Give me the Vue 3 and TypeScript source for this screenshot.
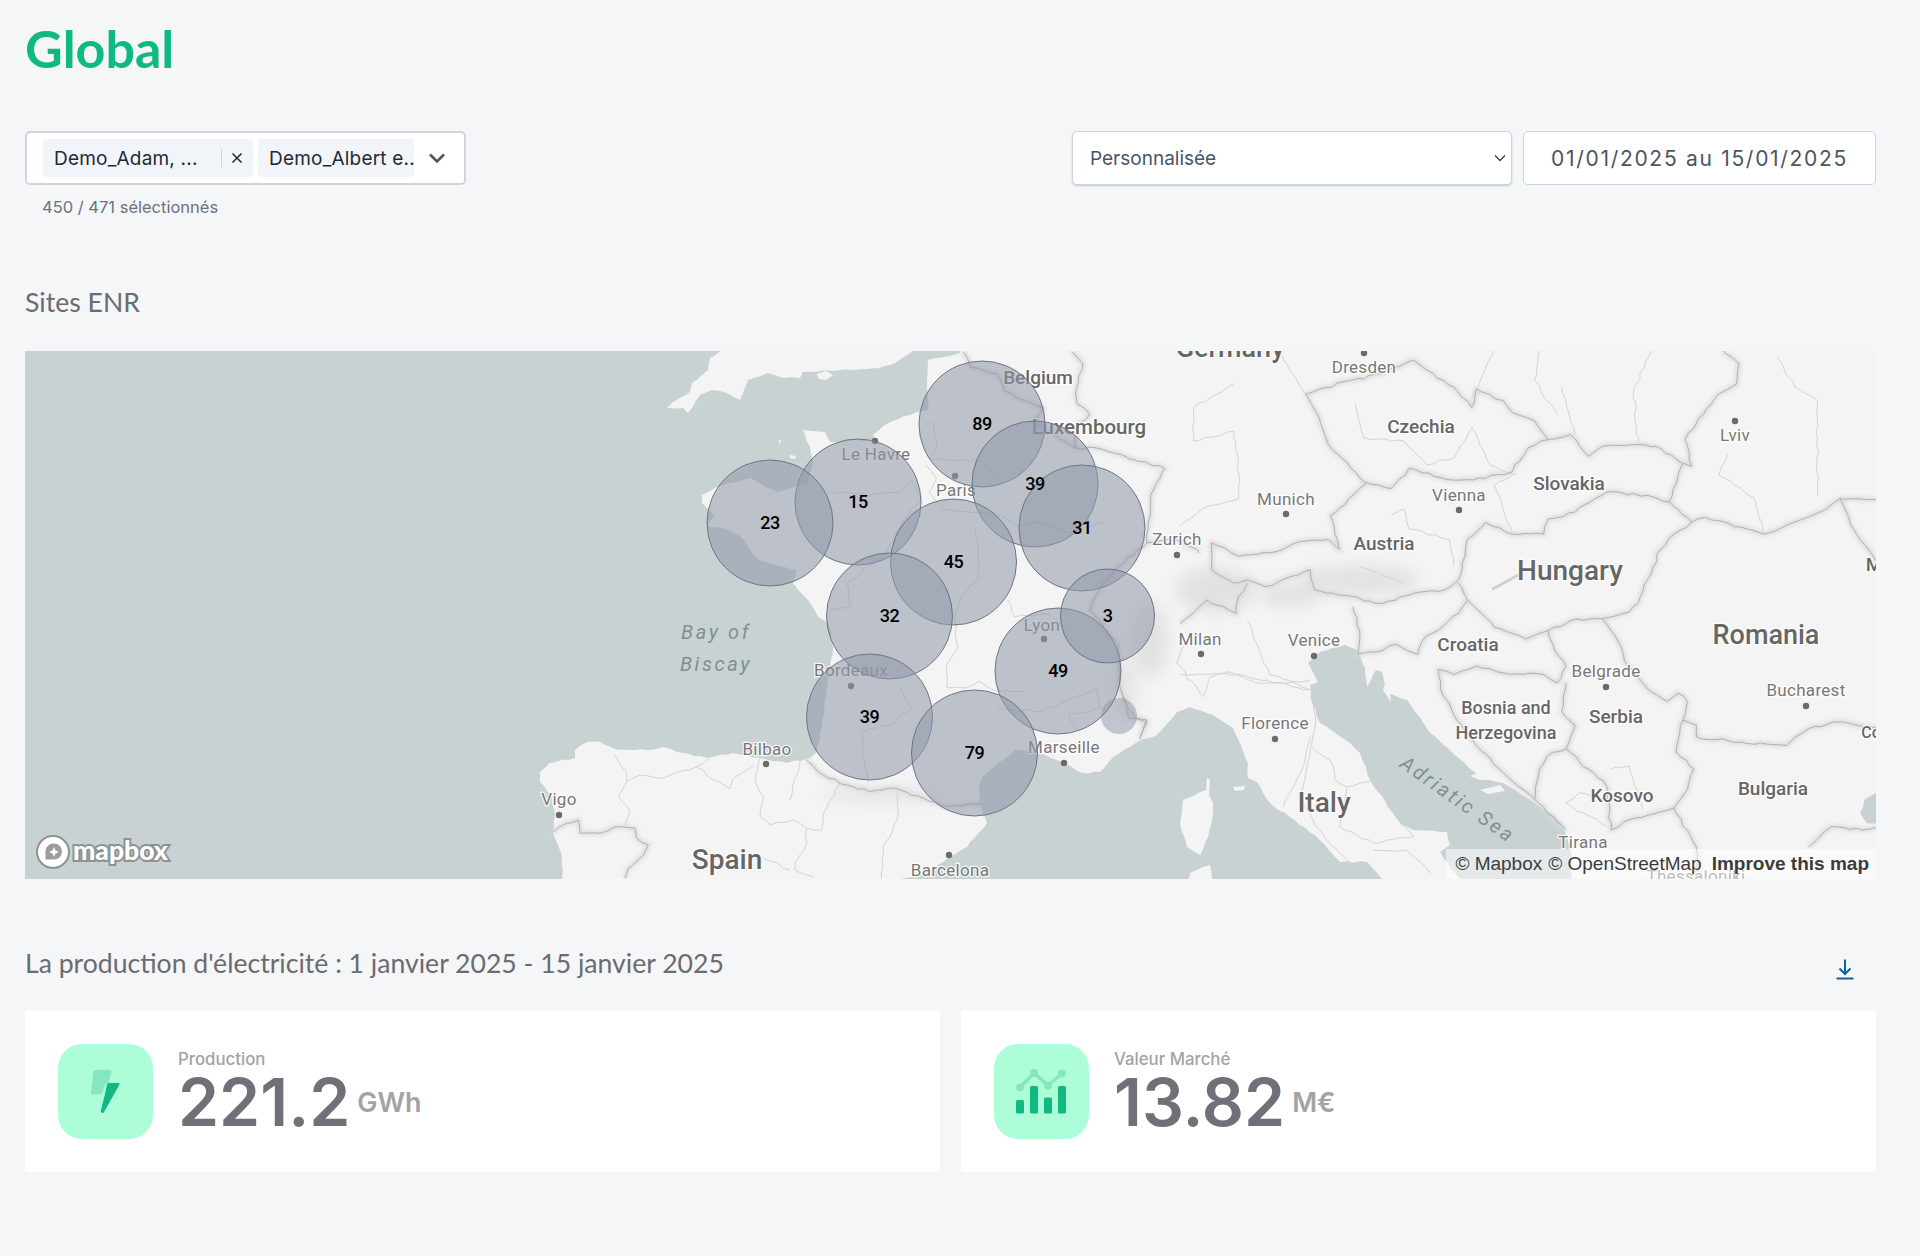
<script setup lang="ts">
// The map is drawn on a free canvas: its viewBox uses page pixels, so the
// coastlines, labels and clusters below sit where they sit in the reference.
type Frame = (points: number[], amp?: number) => string

const noise = (x: number, y: number) => {
  const s = Math.sin(x * 12.9898 + y * 78.233) * 43758.5453
  return s - Math.floor(s) - 0.5
}

// Long straight runs get broken up so borders and coasts look hand-surveyed.
const frame = (x0: number, y0: number, sx: number, sy: number): Frame => (points, amp = 2.6) => {
  const out: string[] = []
  for (let i = 0; i < points.length; i += 2) {
    const x = x0 + points[i] * sx
    const y = y0 + points[i + 1] * sy
    out.push(`${x.toFixed(1)},${y.toFixed(1)}`)
    if (i + 2 >= points.length) break
    const nx = x0 + points[i + 2] * sx
    const ny = y0 + points[i + 3] * sy
    const steps = Math.floor(Math.hypot(nx - x, ny - y) / 6)
    for (let s = 1; s < steps; s++) {
      const px = x + ((nx - x) * s) / steps
      const py = y + ((ny - y) * s) / steps
      out.push(`${(px + noise(px, py) * amp).toFixed(1)},${(py + noise(py, px) * amp).toFixed(1)}`)
    }
  }
  return out.join(' ')
}

const page = frame(0, 0, 1, 1)
const west = frame(640, 350, 0.357, 0.338)
const east = frame(1180, 350, 0.449, 0.338)
const iberia = frame(500, 700, 1 / 3, 1 / 3)
const italy = frame(1000, 640, 1 / 3, 1 / 3)

const land = [
  page([960,340, 960,353, 928,360, 927,380, 928,410, 917,412, 890,422, 873,435, 875,441, 857,440, 830,442, 825,432, 803,430, 810,447, 813,463, 808,483, 777,492, 750,478, 730,483, 717,487, 702,495, 702,503, 708,509, 715,516, 708,526, 726,529, 740,536, 758,560, 797,570, 793,583, 808,600, 818,617, 829,624, 833,647, 827,688, 822,722, 817,752, 810,758, 787,763, 760,758, 733,753, 707,758, 677,752, 663,747, 647,750, 617,750, 600,742, 587,742, 575,750, 575,758, 550,763, 540,772, 540,782, 552,797, 555,815, 553,833, 562,857, 563,895, 880,895, 900,879, 927,873, 967,847, 987,823, 983,813, 979,803, 979,786, 983,776, 1015,750, 1036,752, 1057,760, 1082,773, 1100,772, 1113,757, 1137,742, 1157,735, 1177,712, 1190,707, 1213,715, 1233,728, 1240,743, 1248,763, 1248,778, 1257,782, 1270,803, 1290,817, 1320,840, 1340,862, 1367,862, 1382,879, 1390,895, 1895,895, 1895,340], 1.6),
  // England
  page([720,340, 720,351, 710,358, 708,370, 692,383, 690,392, 673,402, 667,408, 683,408, 688,413, 700,395, 712,390, 727,393, 740,400, 745,388, 748,380, 768,373, 783,378, 800,378, 803,372, 840,370, 880,368, 897,362, 913,351, 913,340], 1.6),
  // Isle of Wight, Channel Islands
  page([817,374, 826,371, 833,375, 826,380, 819,379], 0),
  page([778,441, 781,440, 780,444], 0),
  page([790,455, 796,456, 795,459, 790,458], 0),
  // Corsica, Sardinia, Elba
  page([1207,778, 1210,780, 1209,795, 1213,803, 1212,820, 1208,837, 1200,855, 1187,847, 1180,823, 1183,800, 1200,792, 1206,790], 1.4),
  page([1190,873, 1210,865, 1214,890, 1187,890], 1.4),
  page([1233,787, 1245,786, 1244,790, 1235,791], 0)
]

const seas = [
  // Adriatic
  page([1308,663, 1320,652, 1345,645, 1358,650, 1365,668, 1367,687, 1376,670, 1382,672, 1387,693, 1407,700, 1430,733, 1449,749, 1480,777, 1503,783, 1535,803, 1562,823, 1571,849, 1571,895, 1470,895, 1440,852, 1450,845, 1447,832, 1413,830, 1400,823, 1370,780, 1360,753, 1350,743, 1320,723, 1312,703, 1310,685, 1318,682], 1.4),
  // Black Sea corner
  east([1570,1290, 1525,1330, 1515,1370, 1530,1400, 1570,1400], 1.4)
]

const islands = [
  page([1383,690, 1388,675, 1391,702], 0),
  page([1396,678, 1400,690, 1405,700, 1399,696], 0),
  page([1470,776, 1480,772, 1492,780, 1480,780], 0),
  page([1480,790, 1500,785, 1505,791, 1488,794], 0)
]

const borders = [
  east([280,130, 310,200, 330,280, 410,390, 470,410, 510,350, 610,385, 680,380, 740,360, 775,290, 820,265, 870,250, 910,315, 940,285, 1020,280, 1060,285, 1120,335, 1140,345]),
  east([1140,345, 1125,265, 1200,130, 1240,100, 1245,40, 1215,10, 1210,0]),
  east([280,130, 380,90, 450,70, 520,30, 540,50, 610,110, 650,170, 660,115, 720,150, 740,185, 790,210, 820,265]),
  east([415,395, 335,490, 350,560, 355,590, 330,560, 280,565, 200,600, 130,610, 70,570, 70,650, 120,690, 150,680, 190,700, 290,650, 300,710, 450,750, 520,720, 590,710, 620,680, 635,610, 640,560, 680,510, 740,545, 810,545, 820,500, 880,480, 950,420, 1040,430, 1090,450, 1140,510, 1170,495, 1300,545, 1440,470, 1470,440, 1560,440]),
  east([1090,450, 1120,335]),
  east([1140,510, 1100,545, 1070,590, 1020,750, 1000,775, 940,795, 870,800, 820,830]),
  east([620,690, 640,740, 700,820, 770,855, 820,830, 835,890, 860,935, 840,985, 810,960, 720,955, 660,935, 610,960, 575,945, 580,1000, 610,1080, 660,1170, 720,1250, 790,1330]),
  east([860,985, 850,1070, 880,1110, 860,1180, 830,1190, 800,1240, 790,1330, 860,1420]),
  east([940,795, 975,860, 990,920, 1040,1000, 1085,1040, 1110,1015, 1130,1040, 1120,1095, 1150,1110, 1150,1145, 1250,1160, 1350,1170, 1400,1120, 1470,1100, 1559,1120]),
  east([1120,1095, 1105,1190, 1145,1240, 1130,1300, 1100,1355, 1000,1390, 960,1420, 950,1290, 860,1180]),
  east([1100,1355, 1150,1470, 1155,1568]),
  east([1400,1470, 1450,1410, 1520,1420, 1559,1410]),
  east([1470,440, 1500,530, 1559,640]),
  east([385,760, 400,830, 395,900, 450,890, 480,870, 530,900, 540,860, 620,780, 640,740]),
  east([0,810, 60,740, 110,770, 125,780, 130,730, 150,690]),
  west([905,5, 925,50, 1000,70, 1020,120, 1080,150, 1130,170, 1100,210, 1220,290, 1280,290, 1470,350, 1430,430, 1420,570, 1340,640, 1290,700, 1260,770, 1340,870, 1345,1000, 1370,1090, 1420,1100, 1400,1150]),
  west([1210,5, 1240,40, 1220,130, 1225,160, 1260,190, 1220,230, 1220,290]),
  west([1420,570, 1500,560, 1560,590, 1568,600]),
  iberia([920,180, 970,225, 1040,255, 1110,275, 1185,265, 1270,295, 1340,320, 1450,310]),
  iberia([160,395, 200,370, 235,360, 240,400, 300,400, 345,380, 405,385, 410,415, 445,435, 430,465, 385,505, 375,535]),
  italy([365,150, 375,190, 410,235, 440,240, 420,295])
]

const regions = [
  west([540,420, 640,430, 730,420, 760,390, 790,440, 740,500, 690,600, 640,640, 580,690, 590,760, 530,770]),
  west([800,340, 830,380, 810,420, 850,470, 940,480, 1010,490, 1060,520, 1120,510, 1200,540, 1300,510]),
  west([940,530, 950,670, 900,730, 880,800, 890,880, 860,930, 860,1000, 910,1000, 950,980, 1000,1010, 1080,1010]),
  west([820,210, 830,290, 810,320, 960,330, 1000,370]),
  west([1030,740, 1050,790, 1140,780, 1200,830]),
  west([730,1000, 760,1060, 700,1110, 620,1130, 630,1230, 640,1280]),
  west([1000,1060, 1120,1070, 1190,1040, 1280,1000, 1290,1060, 1200,1080, 1220,1120]),
  iberia([345,165, 380,215, 380,245, 355,290, 390,330, 375,375]),
  iberia([380,245, 420,225, 490,235, 590,200, 630,175]),
  iberia([590,200, 640,240, 690,265, 700,235, 760,200]),
  iberia([780,175, 765,240, 790,290, 780,350, 810,375, 880,360, 920,385, 965,390, 970,340, 1020,250]),
  iberia([920,385, 920,430, 885,490, 885,510, 940,530]),
  iberia([1195,270, 1195,340, 1170,410, 1150,440, 1145,540]),
  iberia([870,300, 900,180]),
  iberia([790,475, 870,510]),
  east([120,100, 30,170, 30,270, 120,240, 130,330, 130,440, 50,470, 0,520]),
  east([390,160, 410,260, 500,270, 550,340, 610,320, 650,230, 690,340, 750,370]),
  east([280,130, 220,0]),
  east([470,490, 500,470, 510,530, 600,560, 610,640]),
  east([400,640, 500,690]),
  east([740,370, 700,400, 740,540]),
  east([700,0, 650,140]),
  east([850,110, 880,250]),
  east([1050,0, 1010,120, 1020,280]),
  east([1330,20, 1370,110, 1420,150, 1420,430]),
  east([1220,310, 1200,370, 1280,440, 1300,545]),
  east([800,0, 790,90, 840,190]),
  east([150,800, 200,960, 300,1010, 300,1120, 290,1180, 270,1330, 310,1420, 410,1560]),
  east([0,960, 130,960, 300,1010]),
  italy([610,170, 630,110, 680,95, 760,125, 860,130, 930,120]),
  italy([610,170, 530,70, 555,10]),
  italy([930,290, 910,380, 895,410, 880,440, 850,500]),
  italy([935,320, 990,360, 1005,420, 1040,440, 1110,425]),
  italy([1040,440, 1020,560, 1120,610, 1240,590, 1200,550]),
  italy([1120,630, 1220,630, 1290,700]),
  east([950,1410, 860,1340, 890,1310, 950,1330]),
  east([1030,1360, 1000,1230, 960,1240])
]

const cities = [
  { name: 'Dresden', x: 1364, y: 373, dot: [1364, 353] },
  { name: 'Lviv', x: 1735, y: 441, dot: [1735, 421] },
  { name: 'Munich', x: 1286, y: 505, dot: [1286, 514] },
  { name: 'Vienna', x: 1459, y: 501, dot: [1459, 510] },
  { name: 'Zurich', x: 1177, y: 545, dot: [1177, 555] },
  { name: 'Milan', x: 1200, y: 645, dot: [1201, 654] },
  { name: 'Venice', x: 1314, y: 646, dot: [1314, 656] },
  { name: 'Belgrade', x: 1606, y: 677, dot: [1606, 687] },
  { name: 'Bucharest', x: 1806, y: 696, dot: [1806, 706] },
  { name: 'Florence', x: 1275, y: 729, dot: [1275, 739] },
  { name: 'Marseille', x: 1064, y: 753, dot: [1064, 763] },
  { name: 'Barcelona', x: 950, y: 876, dot: [949, 855] },
  { name: 'Bilbao', x: 767, y: 755, dot: [766, 764] },
  { name: 'Vigo', x: 559, y: 805, dot: [559, 815] },
  { name: 'Bordeaux', x: 851, y: 676, dot: [851, 686] },
  { name: 'Lyon', x: 1042, y: 631, dot: [1044, 639] },
  { name: 'Paris', x: 956, y: 496, dot: [955, 476] },
  { name: 'Le Havre', x: 876, y: 460, dot: [875, 441] },
  { name: 'Tirana', x: 1583, y: 848, dot: null },
  { name: 'Thessaloniki', x: 1696, y: 882, dot: null }
]

const countries = [
  { name: 'Germany', x: 1230, y: 357, size: 27 },
  { name: 'Hungary', x: 1570, y: 580, size: 28 },
  { name: 'Romania', x: 1766, y: 644, size: 27 },
  { name: 'Italy', x: 1324, y: 812, size: 28 },
  { name: 'Spain', x: 727, y: 869, size: 28 },
  { name: 'Czechia', x: 1421, y: 433, size: 19 },
  { name: 'Slovakia', x: 1569, y: 490, size: 19 },
  { name: 'Austria', x: 1384, y: 550, size: 19 },
  { name: 'Croatia', x: 1468, y: 651, size: 19 },
  { name: 'Serbia', x: 1616, y: 723, size: 19 },
  { name: 'Bosnia and', x: 1506, y: 714, size: 18 },
  { name: 'Herzegovina', x: 1506, y: 739, size: 18 },
  { name: 'Kosovo', x: 1622, y: 802, size: 19 },
  { name: 'Bulgaria', x: 1773, y: 795, size: 19 },
  { name: 'Luxembourg', x: 1089, y: 434, size: 20.5 },
  { name: 'Belgium', x: 1038, y: 384, size: 19 },
  { name: 'M', x: 1874, y: 571, size: 19 },
  { name: 'Co', x: 1871, y: 738, size: 16 }
]

const clusters = [
  { count: 89, x: 982, y: 424 },
  { count: 39, x: 1035, y: 484 },
  { count: 31, x: 1082, y: 528 },
  { count: 15, x: 858, y: 502 },
  { count: 23, x: 770, y: 523 },
  { count: 45, x: 953.5, y: 562 },
  { count: 32, x: 889.5, y: 616 },
  { count: 49, x: 1058, y: 671 },
  { count: 39, x: 869.5, y: 717 },
  { count: 79, x: 974.5, y: 753 },
  { count: 3, x: 1107.5, y: 616, r: 47 }
]

const kpis = [
  { id: 'production', label: 'Production', value: '221.2', unit: 'GWh' },
  { id: 'market', label: 'Valeur Marché', value: '13.82', unit: 'M€' }
]
</script>

<template>
  <main class="page">
    <h1 class="title">Global</h1>

    <div class="filters">
      <div class="sites">
        <div class="multi">
          <div class="chip chip-first">
            <span class="chip-text">Demo_Adam, ...</span>
            <span class="chip-sep"></span>
            <svg class="chip-x" viewBox="0 0 12 12"><path d="M1.5 1.5l9 9M10.5 1.5l-9 9" /></svg>
          </div>
          <div class="chip chip-cut">
            <span class="chip-text">Demo_Albert e...</span>
          </div>
          <svg class="multi-caret" viewBox="0 0 18 12"><path d="M2 2.5l7 7 7-7" /></svg>
        </div>
        <p class="count">450 / 471 sélectionnés</p>
      </div>

      <div class="period">
        <div class="period-select">
          <span>Personnalisée</span>
          <svg viewBox="0 0 12 8"><path d="M1 1.5l5 5 5-5" /></svg>
        </div>
        <div class="period-dates">01/01/2025 au 15/01/2025</div>
      </div>
    </div>

    <h2 class="heading sites-heading">Sites ENR</h2>

    <div class="map">
      <svg class="map-canvas" viewBox="25 351 1851 528">
        <defs>
          <filter id="soft" x="-30%" y="-30%" width="160%" height="160%">
            <feGaussianBlur stdDeviation="8" />
          </filter>
          <filter id="halo" x="-5%" y="-5%" width="110%" height="110%">
            <feGaussianBlur stdDeviation="2" />
          </filter>
        </defs>

        <rect x="25" y="351" width="1851" height="528" class="sea" />
        <polygon v-for="(p, i) in land" :key="'land' + i" :points="p" class="land" />
        <polygon v-for="(p, i) in seas" :key="'sea' + i" :points="p" class="sea" />
        <polygon v-for="(p, i) in islands" :key="'isle' + i" :points="p" class="land" />

        <g filter="url(#soft)" class="relief">
          <ellipse cx="1215" cy="590" rx="40" ry="22" />
          <ellipse cx="1150" cy="640" rx="18" ry="38" />
          <ellipse cx="1125" cy="690" rx="10" ry="30" />
          <ellipse cx="1360" cy="580" rx="60" ry="14" />
          <ellipse cx="1290" cy="595" rx="30" ry="12" />
          <ellipse cx="880" cy="795" rx="60" ry="6" />
        </g>

        <polyline v-for="(p, i) in regions" :key="'reg' + i" :points="p" class="region" />
        <g filter="url(#halo)">
          <polyline v-for="(p, i) in borders" :key="'halo' + i" :points="p" class="border-halo" />
        </g>
        <polyline v-for="(p, i) in borders" :key="'bor' + i" :points="p" class="border" />
        <polyline :points="east([695,708, 720,690, 755,665], 0)" class="lake" />

        <text x="716" y="639" class="water">Bay of</text>
        <text x="716" y="671" class="water">Biscay</text>
        <text class="water" transform="translate(1454 805) rotate(35)">Adriatic Sea</text>

        <template v-for="c in cities" :key="c.name">
          <circle v-if="c.dot" :cx="c.dot[0]" :cy="c.dot[1]" r="3.2" class="dot" />
          <text :x="c.x" :y="c.y" class="city">{{ c.name }}</text>
        </template>
        <text
          v-for="c in countries"
          :key="c.name"
          :x="c.x"
          :y="c.y"
          :font-size="c.size"
          class="country"
        >{{ c.name }}</text>

        <circle cx="1119" cy="716" r="18" class="cluster-small" />
        <circle
          v-for="c in clusters"
          :key="c.x"
          :cx="c.x"
          :cy="c.y"
          :r="c.r ?? 63"
          class="cluster"
        />
        <text v-for="c in clusters" :key="'n' + c.x" :x="c.x" :y="c.y + 6" class="cluster-count">{{ c.count }}</text>

        <circle cx="53" cy="852" r="16" class="logo-ring" />
        <path
          class="logo-pin"
          d="M54 843.5a8 8 0 0 1 0 16h-8.5v-8.5a8 8 0 0 1 8.5-7.5z"
        />
        <path class="logo-star" d="M54 847l1.5 3.5 3.5 1.5-3.5 1.5-1.5 3.5-1.5-3.5-3.5-1.5 3.5-1.5z" />
        <text x="73" y="860" class="logo-word">mapbox</text>
      </svg>

      <div class="attribution">
        <span>© Mapbox</span>
        <span>© OpenStreetMap</span>
        <strong>Improve this map</strong>
      </div>
    </div>

    <div class="section-head">
      <h2 class="heading">La production d'électricité : 1 janvier 2025 - 15 janvier 2025</h2>
      <svg class="download" viewBox="0 0 18 21">
        <path d="M9 0.5v14M3.5 9.5L9 15l5.5-5.5M0.5 19.5h17" />
      </svg>
    </div>

    <div class="cards">
      <section v-for="k in kpis" :key="k.id" class="card">
        <div class="tile">
          <svg v-if="k.id === 'production'" viewBox="0 0 95 95">
            <path class="soft" d="M38 26h13.5q2.500 0 2 2.500L50.500 39l-3 .5-4 11H35q-2.500 0-2-2.500L35.500 28q.300-2 2.500-2z" />
            <path class="solid" d="M50.500 39h10q1.800 0 1 1.500L46 68q-1 1.500-2.300.8-1.200-.6-.9-2L47 50l2-9.500q.2-1.500 1.500-1.500z" />
          </svg>
          <svg v-else viewBox="0 0 95 95">
            <path class="line" d="M26 43.500L40 29l14 12.500L68 29.500" />
            <circle class="soft" cx="26" cy="43.500" r="4" />
            <circle class="soft" cx="40" cy="29" r="4" />
            <circle class="soft" cx="54" cy="41.500" r="4" />
            <circle class="soft" cx="68" cy="29.500" r="4" />
            <rect class="solid" x="22" y="56" width="8" height="13.500" rx="1.500" />
            <rect class="solid" x="36" y="42" width="8" height="27.500" rx="1.500" />
            <rect class="solid" x="50" y="53.500" width="8" height="16" rx="1.500" />
            <rect class="solid" x="64" y="42" width="8" height="27.500" rx="1.500" />
          </svg>
        </div>
        <div class="kpi">
          <div class="kpi-label">{{ k.label }}</div>
          <div class="kpi-line">
            <span class="kpi-value">{{ k.value }}</span>
            <span class="kpi-unit">{{ k.unit }}</span>
          </div>
        </div>
      </section>
    </div>
  </main>
</template>

<style>
body {
  margin: 0;
  background: #f5f6f8;
}
</style>

<style scoped>
.page {
  box-sizing: border-box;
  min-height: 1256px;
  padding: 18px 44px 0 25px;
  font-family: Inter, 'Liberation Sans', sans-serif;
}

.title {
  margin: 0;
  font-family: Lato, sans-serif;
  font-size: 52px;
  font-weight: 700;
  line-height: 60px;
  color: #10b981;
}

.filters {
  display: flex;
  justify-content: space-between;
  margin-top: 53px;
}

.multi {
  box-sizing: border-box;
  display: flex;
  align-items: center;
  gap: 5px;
  width: 441px;
  height: 54px;
  padding: 0 15px 0 16px;
  background: #fff;
  border: 2px solid #d1d5db;
  border-radius: 5px;
}

.chip {
  box-sizing: border-box;
  display: flex;
  align-items: center;
  height: 38px;
  padding-left: 11px;
  background: #f1f5f9;
  border-radius: 3px;
  flex-shrink: 0;
}

.chip-first {
  width: 210px;
}

.chip-cut {
  width: 156px;
  overflow: hidden;
}

.chip-text {
  font-size: 19px;
  letter-spacing: 0.2px;
  color: #1f2937;
  white-space: nowrap;
}

.chip-sep {
  width: 1px;
  height: 18px;
  margin: 0 9px 0 auto;
  background: #cbd5e1;
}

.chip-x {
  width: 12px;
  height: 12px;
  margin-right: 10px;
  fill: none;
  stroke: #1f2937;
  stroke-width: 1.500;
}

.multi-caret {
  width: 18px;
  height: 12px;
  margin-left: 9px;
  fill: none;
  stroke: #4b5563;
  stroke-width: 2.500;
}

.count {
  margin: 12px 0 0 17px;
  font-size: 16.500px;
  line-height: 20px;
  color: #6b7280;
}

.period {
  display: flex;
  gap: 11px;
  height: 54px;
}

.period-select {
  box-sizing: border-box;
  display: flex;
  align-items: center;
  justify-content: space-between;
  width: 440px;
  padding: 0 5px 0 17px;
  background: #fff;
  border: 1px solid #cbd5e1;
  border-radius: 5px;
  box-shadow: 0 1px 2px rgba(100, 116, 139, 0.35);
  font-size: 19px;
  color: #475569;
}

.period-select svg {
  width: 12px;
  height: 8px;
  fill: none;
  stroke: #374151;
  stroke-width: 1.300;
}

.period-dates {
  box-sizing: border-box;
  display: flex;
  align-items: center;
  width: 353px;
  padding-left: 27px;
  background: #fff;
  border: 1.5px solid #cbd5e1;
  border-radius: 5px;
  font-size: 21px;
  letter-spacing: 1.700px;
  color: #4b5563;
  white-space: nowrap;
}

.heading {
  margin: 0;
  font-family: Lato, sans-serif;
  font-size: 26.600px;
  font-weight: 400;
  line-height: 32px;
  color: #6b6b70;
}

.sites-heading {
  margin-top: 69px;
}

.map {
  position: relative;
  height: 528px;
  margin-top: 33px;
  overflow: hidden;
}

.map-canvas {
  display: block;
  width: 100%;
  height: 100%;
}

.sea {
  fill: #c9d2d3;
}

.land {
  fill: #f4f4f4;
}

.relief {
  fill: #d6d6d6;
  opacity: 0.6;
}

.region {
  fill: none;
  stroke: #d3d3d3;
  stroke-width: 1;
}

.border {
  fill: none;
  stroke: #b0b2b2;
  stroke-width: 1;
}

.border-halo {
  fill: none;
  stroke: #d9d9d9;
  stroke-width: 4;
}

.lake {
  fill: none;
  stroke: #c9d2d3;
  stroke-width: 3;
}

.water {
  font-family: Roboto, sans-serif;
  font-size: 20px;
  font-style: italic;
  letter-spacing: 2.600px;
  text-anchor: middle;
  fill: #7f9092;
}

.dot {
  fill: #6a6a6a;
}

.city {
  font-family: Roboto, sans-serif;
  font-size: 17px;
  letter-spacing: 0.3px;
  text-anchor: middle;
  fill: #777;
  stroke: #fff;
  stroke-width: 2.500px;
  stroke-opacity: 0.85;
  paint-order: stroke;
}

.country {
  font-family: Roboto, sans-serif;
  font-weight: 500;
  text-anchor: middle;
  fill: #666;
  stroke: #fff;
  stroke-width: 2.500px;
  stroke-opacity: 0.85;
  paint-order: stroke;
}

.cluster {
  fill: rgba(144, 153, 170, 0.56);
  stroke: #6d7484;
  stroke-width: 1;
}

.cluster-small {
  fill: rgba(144, 153, 170, 0.5);
}

.cluster-count {
  font-family: Roboto, sans-serif;
  font-size: 18px;
  font-weight: 500;
  letter-spacing: -0.5px;
  text-anchor: middle;
  fill: #000;
}

.logo-ring {
  fill: #fff;
  stroke: #8e9293;
  stroke-width: 2;
}

.logo-pin {
  fill: #9a9d9e;
}

.logo-star {
  fill: #fff;
}

.logo-word {
  font-family: Lato, sans-serif;
  font-size: 26.500px;
  font-weight: 900;
  fill: #fff;
  stroke: #8e9293;
  stroke-width: 4px;
  paint-order: stroke;
}

.attribution {
  position: absolute;
  right: 0;
  bottom: 0;
  display: flex;
  align-items: center;
  gap: 6px;
  height: 30px;
  padding: 0 7px 0 9px;
  background: rgba(255, 255, 255, 0.5);
  font-family: 'Liberation Sans', sans-serif;
  font-size: 19px;
  color: #3a3c3e;
}

.attribution strong {
  margin-left: 4px;
  font-weight: 700;
}

.section-head {
  display: flex;
  align-items: center;
  justify-content: space-between;
  margin-top: 68px;
  padding-right: 22px;
}

.download {
  align-self: flex-end;
  width: 18px;
  height: 21px;
  margin-bottom: -1px;
  fill: none;
  stroke: #0c62a5;
  stroke-width: 2;
}

.cards {
  display: grid;
  grid-template-columns: 1fr 1fr;
  gap: 21px;
  margin-top: 32px;
}

.card {
  display: flex;
  align-items: center;
  height: 161px;
  padding-left: 33px;
  background: #fff;
}

.tile {
  width: 95px;
  height: 95px;
  background: #adfed8;
  border-radius: 24px;
}

.tile svg {
  display: block;
  width: 95px;
  height: 95px;
}

.soft {
  fill: #86e7bf;
}

.solid {
  fill: #10b981;
}

.line {
  fill: none;
  stroke: #86e7bf;
  stroke-width: 3.500;
}

.kpi {
  margin-left: 25px;
}

.kpi-label {
  font-size: 16.800px;
  font-weight: 500;
  line-height: 20px;
  color: #a3a3a3;
}

.kpi-line {
  display: flex;
  align-items: center;
  gap: 7px;
  line-height: 64px;
}

.kpi-value {
  font-size: 66px;
  font-weight: 600;
  color: #6f7078;
}

.kpi-unit {
  margin-top: 2px;
  font-size: 27px;
  font-weight: 600;
  color: #a3a3a3;
}
</style>
